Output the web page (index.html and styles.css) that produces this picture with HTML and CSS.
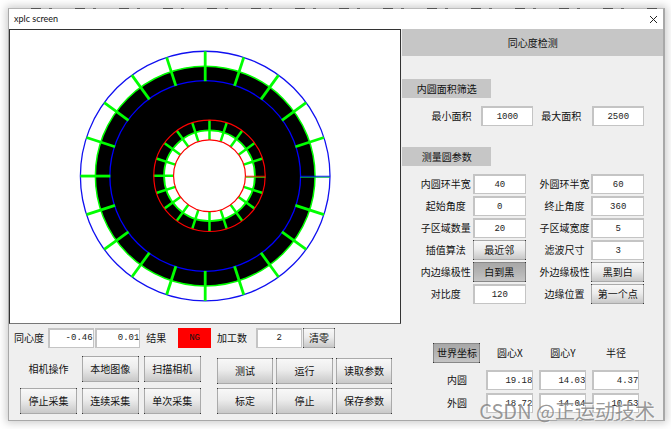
FILE: index.html
```html
<!DOCTYPE html>
<html lang="zh-CN">
  <head>
    <meta charset="UTF-8" />
    <meta name="viewport" content="width=device-width, initial-scale=1.0" />
    <link rel="stylesheet" href="styles.css">
    <title>xplc screen</title>
  </head>
  <body>
    <div class="window">
      <div class="title-bar">
        <span>xplc screen</span>
        <button class="close" aria-label="关闭">
          <svg width="9" height="9" viewBox="0 0 9 9"><path d="M1 1l7 7M8 1l-7 7" stroke="#222" fill="none" /></svg>
        </button>
      </div>
      <div class="content">
        <div class="left">
          <div class="view">
            <svg viewBox="10 30 391 293" shape-rendering="geometricPrecision">
              <defs>
                <path id="out" d="M95 0H125" stroke-width="2.8" />
                <g id="out5">
                  <use href="#out" transform="rotate(18)" />
                  <use href="#out" transform="rotate(36)" />
                  <use href="#out" transform="rotate(54)" />
                  <use href="#out" transform="rotate(72)" />
                </g>
                <path id="in" d="M36 0H56" stroke-width="2.5" />
                <g id="in5">
                  <use href="#in" transform="rotate(18)" />
                  <use href="#in" transform="rotate(36)" />
                  <use href="#in" transform="rotate(54)" />
                  <use href="#in" transform="rotate(72)" />
                </g>
              </defs>
              <!-- outer ring -->
              <g transform="translate(205.5 176.3)" fill="none" stroke="#0f0">
                <circle r="110" fill="#000" stroke-width="1.5" />
                <circle r="95.5" stroke="#00f" stroke-width="1.3" />
                <circle r="125" stroke="#1010f0" stroke-width="1.3" />
                <use href="#out5" />
                <use href="#out5" transform="rotate(90)" />
                <use href="#out5" transform="rotate(180)" />
                <use href="#out5" transform="rotate(270)" />
                <use href="#out" transform="rotate(90)" />
                <use href="#out" transform="rotate(180)" />
                <use href="#out" transform="rotate(270)" />
                <path d="M95 .2H125" stroke="#00f" />
                <path d="M95 1.2H125" stroke="#00b050" />
              </g>
              <!-- inner ring -->
              <g transform="translate(209.8 176)" fill="none" stroke="#0f0">
                <circle r="45.5" fill="#fff" stroke-width="1.8" />
                <use href="#in5" />
                <use href="#in5" transform="rotate(90)" />
                <use href="#in5" transform="rotate(180)" />
                <use href="#in5" transform="rotate(270)" />
                <use href="#in" transform="rotate(90)" />
                <use href="#in" transform="rotate(180)" />
                <use href="#in" transform="rotate(270)" />
                <circle r="36" stroke="#f00" stroke-width="1.2" />
                <circle r="55.8" stroke="#f00" stroke-width="1.2" />
                <path d="M36 .5H56" stroke="#f00" />
                <path d="M36 1.5H56" stroke="#4c0" />
              </g>
            </svg>
          </div>
          <div class="result">
            <label for="conc">同心度</label>
            <input id="conc" class="num" value="-0.46" />
            <input class="num" aria-label="同心度误差" value="0.01" />
            <span class="result-name">结果</span>
            <span class="ng">NG</span>
            <label for="count">加工数</label>
            <input id="count" value="2" />
            <button class="btn clear">清零</button>
          </div>
          <div class="actions">
            <div class="group camera">
              <span class="group-name">相机操作</span>
              <button class="btn">本地图像</button>
              <button class="btn">扫描相机</button>
              <button class="btn">停止采集</button>
              <button class="btn">连续采集</button>
              <button class="btn">单次采集</button>
            </div>
            <div class="group run">
              <button class="btn">测试</button>
              <button class="btn">运行</button>
              <button class="btn">读取参数</button>
              <button class="btn">标定</button>
              <button class="btn">停止</button>
              <button class="btn">保存参数</button>
            </div>
          </div>
        </div>
        <div class="right">
          <div class="heading">同心度检测</div>
          <div class="section">内圆面积筛选</div>
          <div class="area">
            <label for="min">最小面积</label>
            <input id="min" value="1000" />
            <label for="max">最大面积</label>
            <input id="max" value="2500" />
          </div>
          <div class="section measure">测量圆参数</div>
          <div class="params">
            <label for="p1">内圆环半宽</label>
            <input id="p1" value="40" />
            <label for="p2">外圆环半宽</label>
            <input id="p2" value="60" />
            <label for="p3">起始角度</label>
            <input id="p3" value="0" />
            <label for="p4">终止角度</label>
            <input id="p4" value="360" />
            <label for="p5">子区域数量</label>
            <input id="p5" value="20" />
            <label for="p6">子区域宽度</label>
            <input id="p6" value="5" />
            <label for="p7">插值算法</label>
            <button id="p7" class="btn">最近邻</button>
            <label for="p8">滤波尺寸</label>
            <input id="p8" value="3" />
            <label for="p9">内边缘极性</label>
            <button id="p9" class="btn pressed">白到黑</button>
            <label for="p10">外边缘极性</label>
            <button id="p10" class="btn">黑到白</button>
            <label for="p11">对比度</label>
            <input id="p11" value="120" />
            <label for="p12">边缘位置</label>
            <button id="p12" class="btn">第一个点</button>
          </div>
          <table class="coords">
            <tr>
              <th><button class="btn pressed">世界坐标</button></th>
              <th>圆心X</th>
              <th>圆心Y</th>
              <th>半径</th>
            </tr>
            <tr>
              <th>内圆</th>
              <td><input class="num" aria-label="内圆圆心X" value="19.18" /></td>
              <td><input class="num" aria-label="内圆圆心Y" value="14.03" /></td>
              <td><input class="num" aria-label="内圆半径" value="4.37" /></td>
            </tr>
            <tr>
              <th>外圆</th>
              <td><input class="num" aria-label="外圆圆心X" value="18.72" /></td>
              <td><input class="num" aria-label="外圆圆心Y" value="14.04" /></td>
              <td><input class="num" aria-label="外圆半径" value="10.53" /></td>
            </tr>
          </table>
        </div>
      </div>
      <div class="watermark">CSDN @正运动技术</div>
    </div>
  </body>
</html>
```
FILE: styles.css
```css
* {
  box-sizing: border-box;
}
body {
  margin: 0;
  padding: 8px 6px 8px 8px;
  background: #fff;
  font-family: "Noto Sans CJK SC", sans-serif;
  font-size: 10px;
  line-height: 14px;
  color: #111;
}
.window {
  position: relative;
  background: #efefef;
  border: 1px solid #a8a8a8;
  border-top-color: #b4b4b4;
  border-right: 2px solid #a8a8a8;
  box-shadow: 0 0 8px 2px rgba(0, 0, 0, 0.2);
}
/* bits of the page behind, showing at the top edge */
.window::before {
  content: "";
  position: absolute;
  left: 22px;
  right: 0;
  top: -1px;
  height: 1px;
  background: repeating-linear-gradient(90deg, #555 0 10px, #bbb 10px 18px, #666 18px 21px, #bbb 21px 44px);
}
.title-bar {
  display: flex;
  justify-content: space-between;
  align-items: center;
  height: 20px;
  padding: 0 5px;
  background: #fff;
  font-family: Lato, "Open Sans", sans-serif;
  font-size: 9px;
}
.close {
  display: flex;
  padding: 0;
  border: 0;
  background: none;
}
.content {
  display: grid;
  grid-template-columns: 3fr 2fr;
}
.view {
  border: 1px solid #333;
  border-bottom-color: #777;
  background: #fff;
}
.view svg {
  display: block;
  width: 100%;
}
input {
  min-width: 0;
  width: 100%;
  height: 20px;
  margin: 0;
  padding: 0 2px;
  border: 1px solid #c4c4c4;
  border-width: 2px 1px 1px 2px;
  background: #fff;
  font-family: "Liberation Mono", monospace;
  font-size: 9px;
  color: #222;
  text-align: center;
}
.num {
  padding: 0;
  text-align: right;
}
.btn {
  position: relative;
  height: 20px;
  margin: 0;
  padding: 0;
  border: 1px solid #aaa;
  background: linear-gradient(#f8f8f8, #ececec 45%, #c8c8c8);
  font-family: inherit;
  font-size: 10px;
  line-height: 14px;
  color: #111;
  white-space: nowrap;
}
/* dark corner dots */
.btn::before {
  content: "";
  position: absolute;
  inset: -1px;
  background:
    linear-gradient(#333, #333) 0 0 / 1px 1px,
    linear-gradient(#333, #333) 100% 0 / 1px 1px,
    linear-gradient(#333, #333) 0 100% / 1px 1px,
    linear-gradient(#333, #333) 100% 100% / 1px 1px;
  background-repeat: no-repeat;
}
.btn.pressed {
  border-color: #888;
  background: linear-gradient(#a8a8a8, #b4b4b4 50%, #c4c4c4);
}
.result {
  display: grid;
  grid-template-columns: 33fr 46fr 46fr 36fr 33fr 43fr 46fr 33fr;
  column-gap: 1px;
  align-items: center;
  padding: 4px 66px 8px 5px;
  white-space: nowrap;
}
.result-name {
  padding-left: 5px;
}
.ng {
  height: 20px;
  background: #f00;
  font-family: "Liberation Mono", monospace;
  font-size: 9px;
  line-height: 20px;
  text-align: center;
}
.ng + label {
  padding-left: 5px;
}
.actions {
  display: grid;
  grid-template-columns: 181fr 176fr;
  column-gap: 16px;
  padding: 0 9px 6px 11px;
}
.group {
  display: grid;
  grid-template-columns: repeat(3, 1fr);
  align-content: space-between;
}
.camera {
  gap: 6px 5px;
}
.run {
  gap: 4px 3px;
  padding-top: 2px;
}
.group .btn {
  height: 26px;
}
.group-name {
  align-self: center;
  text-align: center;
}
.right {
  padding-left: 1px;
}
.heading {
  height: 27px;
  background: #c6c6c6;
  line-height: 27px;
  text-align: center;
}
.section {
  width: 34%;
  margin-top: 23px;
  background: #c6c6c6;
  line-height: 19px;
  text-align: center;
}
.area {
  display: grid;
  grid-template-columns: 41fr 52fr 42fr 52fr;
  column-gap: 8px;
  align-items: center;
  padding: 8px 19px 0 29px;
  white-space: nowrap;
}
.measure {
  margin-top: 21px;
}
.params {
  display: grid;
  grid-template-columns: 54fr 52fr 65fr 52fr;
  row-gap: 2px;
  align-items: center;
  padding: 8px 19px 0 16px;
  text-align: center;
  white-space: nowrap;
}
.params label:nth-of-type(even) {
  padding-left: 12px;
}
.coords {
  width: 212px;
  margin: 39px 0 0 28px;
  border-collapse: collapse;
  table-layout: fixed;
}
.coords th,
.coords td {
  padding: 0 3px 3px;
  font-weight: normal;
  white-space: nowrap;
}
.coords tr:first-child th {
  padding-bottom: 7px;
}
.coords .btn {
  display: block;
  width: 100%;
}
.coords input {
  display: block;
}
.watermark {
  position: absolute;
  right: 8px;
  bottom: -5px;
  font-size: 20px;
  line-height: 28px;
  color: rgba(120, 120, 120, 0.75);
  text-shadow: 1px 1px 0 rgba(255, 255, 255, 0.6);
  pointer-events: none;
}
```
